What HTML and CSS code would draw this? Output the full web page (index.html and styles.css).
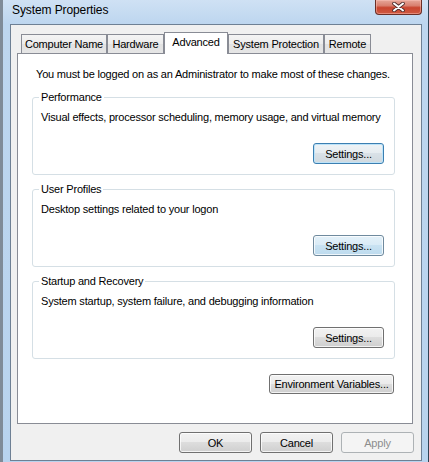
FILE: index.html
```html
<!DOCTYPE html>
<html>
<head>
<meta charset="utf-8">
<link rel="stylesheet" href="styles.css">
</head>
<body>
<div class="window">
  <div class="titlebar">
    <span class="title">System Properties</span>
    <div class="close">
      <svg width="13" height="10" viewBox="0 0 13 10">
        <path d="M2 1.5 L11 8.5 M11 1.5 L2 8.5" stroke="#4a2a2a" stroke-width="3.6" stroke-linecap="round" fill="none"/>
        <path d="M2 1.5 L11 8.5 M11 1.5 L2 8.5" stroke="#ffffff" stroke-width="2" stroke-linecap="round" fill="none"/>
      </svg>
    </div>
  </div>
  <div class="client">
    <div class="tabs">
      <div class="tab tab-name">Computer Name</div>
      <div class="tab tab-hw">Hardware</div>
      <div class="tab tab-adv active">Advanced</div>
      <div class="tab tab-sp">System Protection</div>
      <div class="tab tab-rem">Remote</div>
    </div>
    <div class="panel">
      <p class="intro">You must be logged on as an Administrator to make most of these changes.</p>
      <fieldset class="group">
        <legend>Performance</legend>
        <p class="desc">Visual effects, processor scheduling, memory usage, and virtual memory</p>
        <div class="row"><button class="btn btn-settings btn-focus">Settings...</button></div>
      </fieldset>
      <fieldset class="group">
        <legend>User Profiles</legend>
        <p class="desc">Desktop settings related to your logon</p>
        <div class="row"><button class="btn btn-settings btn-hot">Settings...</button></div>
      </fieldset>
      <fieldset class="group">
        <legend>Startup and Recovery</legend>
        <p class="desc">System startup, system failure, and debugging information</p>
        <div class="row"><button class="btn btn-settings">Settings...</button></div>
      </fieldset>
      <div class="env-row"><button class="btn btn-env">Environment Variables...</button></div>
    </div>
    <div class="footer">
      <button class="btn btn-dlg">OK</button>
      <button class="btn btn-dlg">Cancel</button>
      <button class="btn btn-dlg btn-disabled">Apply</button>
    </div>
  </div>
</div>
</body>
</html>
```
FILE: styles.css
```css
* { box-sizing: border-box; }
html, body { margin: 0; padding: 0; }
body {
  font-family: "Liberation Sans", Arial, sans-serif;
  font-size: 11px;
  letter-spacing: -0.2px;
  color: #000;
  background: #fff;
  overflow: hidden;
}
.window {
  width: 429px;
  height: 462px;
  display: flex;
  flex-direction: column;
  background: linear-gradient(180deg, #cfe1f4 0px, #bdd6ef 24px, #b8d3ee 100%);
  border-left: 3px solid #7f8b98;
  border-right: 1px solid #2f4355;
  padding: 0 6px 1px 7px;
}
.titlebar {
  flex: none;
  height: 24px;
  display: flex;
  align-items: flex-start;
}
.title {
  padding: 3px 0 0 2px;
  font-size: 12px;
  line-height: 14px;
  letter-spacing: -0.1px;
}
.close {
  margin-left: auto;
  width: 47px;
  height: 15px;
  border: 1px solid #6a2e26;
  border-top: none;
  border-radius: 0 0 4px 4px;
  background: linear-gradient(180deg, #e6a799 0%, #d9806f 40%, #c9452f 55%, #cf5a42 100%);
  box-shadow: inset 0 0 0 1px rgba(255, 200, 190, 0.45);
  display: flex;
  align-items: center;
  justify-content: center;
}
.client {
  flex: 1;
  border: 1px solid #6e8094;
  background: #f0f0f0;
  display: flex;
  flex-direction: column;
}
.tabs {
  display: flex;
  align-items: flex-end;
  height: 29px;
  padding-left: 10px;
  margin-bottom: -1px;
  position: relative;
  z-index: 1;
}
.tab {
  height: 20px;
  border: 1px solid #898c95;
  background: linear-gradient(180deg, #f4f4f4 0%, #ececec 50%, #e2e2e2 51%, #e6e6e6 100%);
  line-height: 18px;
  text-align: center;
  white-space: nowrap;
}
.tab.active {
  height: 22px;
  border-bottom: none;
  background: #fff;
  line-height: 18px;
  padding-top: 0;
}
.tab-name { width: 86px; }
.tab-hw { width: 57px; }
.tab-adv { width: 64px; }
.tab-sp { width: 96px; }
.tab-rem { width: 47px; }
.panel {
  margin-left: 6px;
  width: 396px;
  height: 371px;
  flex: none;
  border: 1px solid #898c95;
  background: #fff;
  padding: 0 0 0 14px;
}
.intro {
  margin: 13px 0 0 4px;
  line-height: 14px;
}
.group {
  width: 363px;
  margin: 9px 0 0 0;
  padding: 0 0 10px 0;
  border: 1px solid #d5dfe5;
  border-radius: 3px;
  min-width: 0;
}
.group + .group { margin-top: 7px; }
.group legend {
  margin-left: 6px;
  padding: 0 2px;
  line-height: 14px;
}
.desc {
  margin: 6px 0 0 8px;
  line-height: 14px;
}
.row {
  display: flex;
  justify-content: flex-end;
  margin-top: 19px;
  padding-right: 10px;
}
.btn {
  font-family: inherit;
  font-size: 11px;
  letter-spacing: -0.2px;
  color: #000;
  height: 21px;
  padding: 0;
  border: 1px solid #707070;
  border-radius: 3px;
  background: linear-gradient(180deg, #f2f2f2 0%, #ebebeb 49%, #dddddd 50%, #cfcfcf 100%);
  box-shadow: inset 0 0 0 1px rgba(255, 255, 255, 0.75);
  text-align: center;
}
.btn-settings { width: 71px; }
.btn-focus {
  border-color: #3c7fb1;
  background: linear-gradient(180deg, #eef3f6 0%, #e6ecf0 49%, #d9e1e7 50%, #d0d9df 100%);
  box-shadow: inset 0 0 0 1px #bde3f9;
}
.btn-hot {
  border-color: #6f8a9e;
  background: linear-gradient(180deg, #e4f1f9 0%, #d9ebf6 49%, #c9e2f2 50%, #bddbee 100%);
}
.env-row {
  display: flex;
  justify-content: flex-end;
  width: 363px;
  margin-top: 15px;
  padding-right: 1px;
}
.btn-env { width: 125px; height: 20px; }
.footer {
  display: flex;
  justify-content: flex-end;
  gap: 8px;
  padding: 8px 7px 0 0;
}
.btn-dlg { width: 73px; }
.btn-disabled {
  color: #8d8d8d;
  border-color: #adb2b5;
  background: #f4f4f4;
  box-shadow: none;
}
```
